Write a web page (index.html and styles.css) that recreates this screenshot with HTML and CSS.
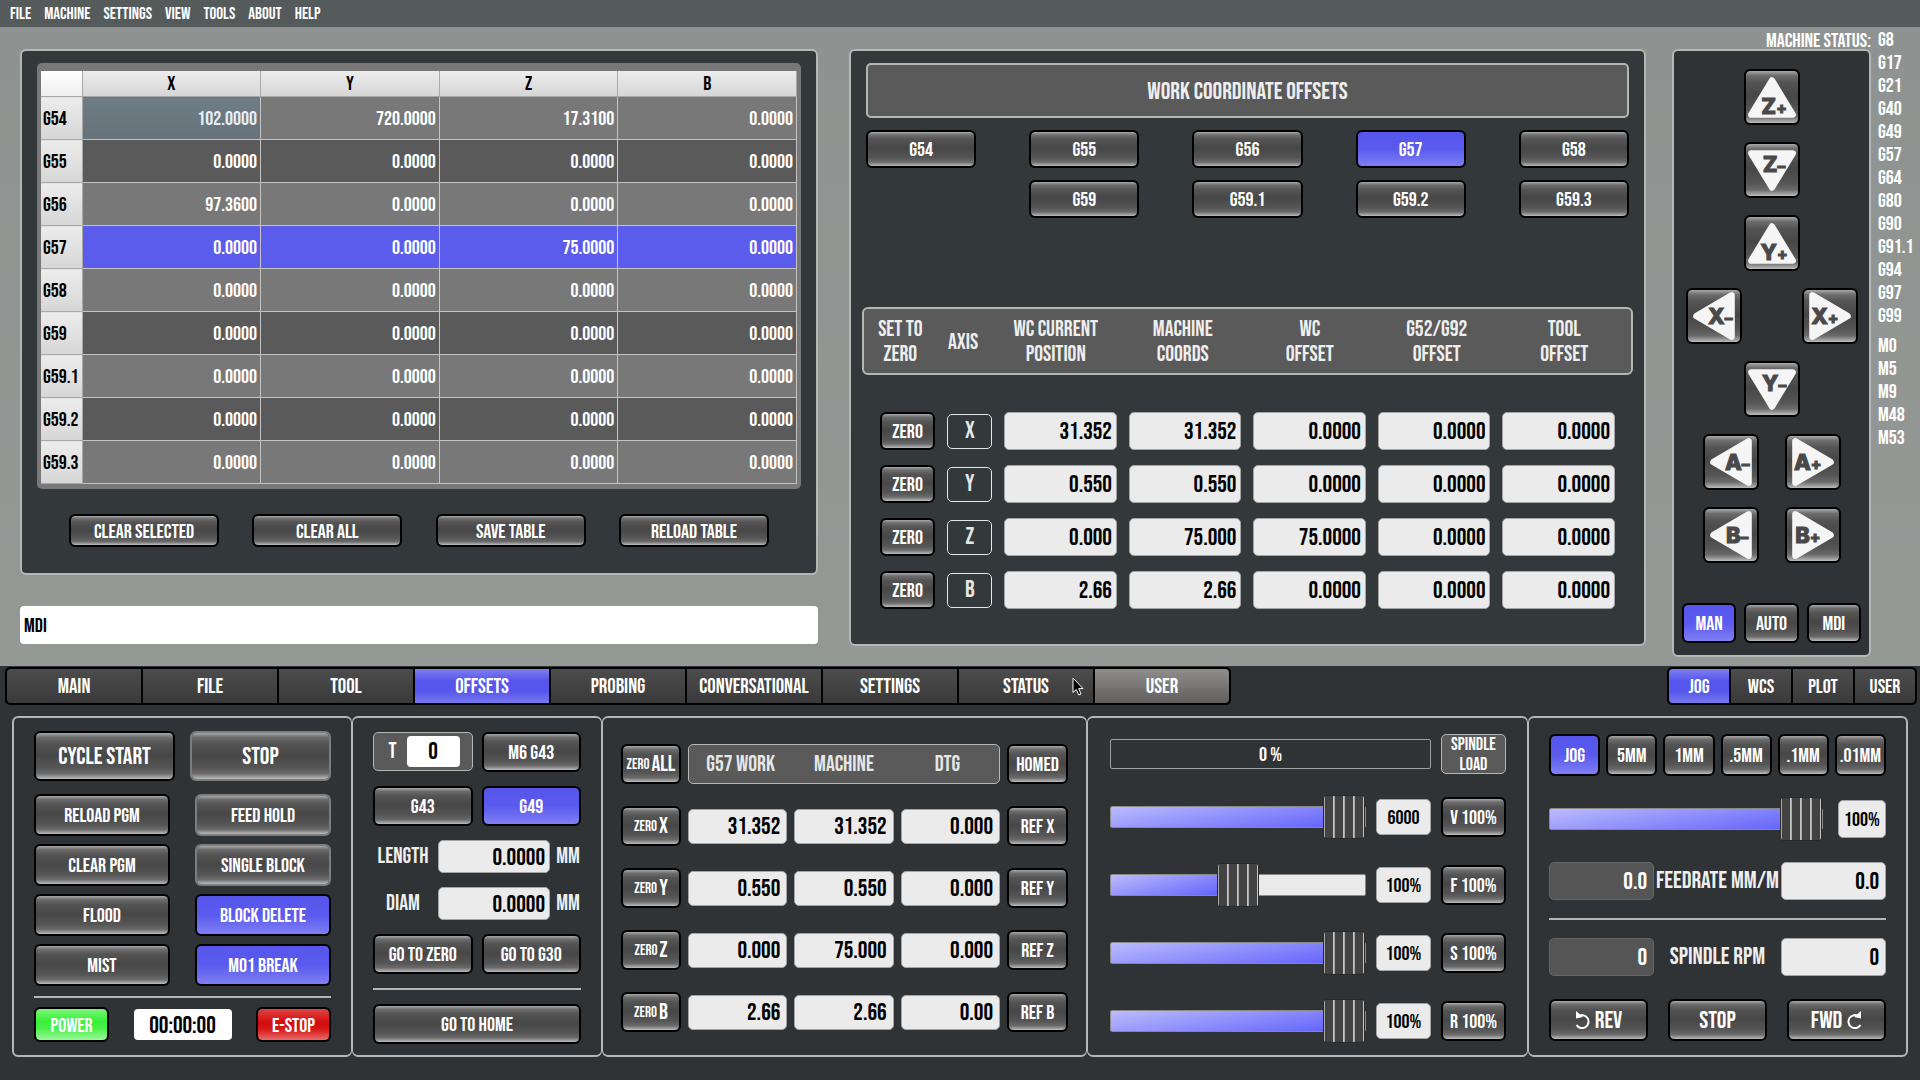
FILE: index.html
```
<!DOCTYPE html>
<html lang="en">
<head>
<meta charset="utf-8">
<title>Machine Control - Offsets</title>
<link rel="stylesheet" href="styles.css">
</head>
<body>
<svg width="0" height="0" class="defs" aria-hidden="true">
  <defs>
    <path id="tri-up" d="M25 9 L45 42 H5 Z"/>
    <path id="tri-down" d="M25 42 L45 9 H5 Z"/>
    <path id="tri-left" d="M8 25 L42 5 V45 Z"/>
    <path id="tri-right" d="M42 25 L8 5 V45 Z"/>
  </defs>
</svg>

<nav class="menubar">
  <a href="#">File</a><a href="#">Machine</a><a href="#">Settings</a><a href="#">View</a><a href="#">Tools</a><a href="#">About</a><a href="#">Help</a>
</nav>

<main class="upper">
  <div class="left">
    <section class="panel table-panel">
      <div class="table-frame">
        <table class="offsets">
          <thead><tr><th class="corner"></th><th>X</th><th>Y</th><th>Z</th><th>B</th></tr></thead>
          <tbody>
            <tr><th>G54</th><td class="current">102.0000</td><td>720.0000</td><td>17.3100</td><td>0.0000</td></tr>
            <tr><th>G55</th><td>0.0000</td><td>0.0000</td><td>0.0000</td><td>0.0000</td></tr>
            <tr><th>G56</th><td>97.3600</td><td>0.0000</td><td>0.0000</td><td>0.0000</td></tr>
            <tr class="active"><th>G57</th><td>0.0000</td><td>0.0000</td><td>75.0000</td><td>0.0000</td></tr>
            <tr><th>G58</th><td>0.0000</td><td>0.0000</td><td>0.0000</td><td>0.0000</td></tr>
            <tr><th>G59</th><td>0.0000</td><td>0.0000</td><td>0.0000</td><td>0.0000</td></tr>
            <tr><th>G59.1</th><td>0.0000</td><td>0.0000</td><td>0.0000</td><td>0.0000</td></tr>
            <tr><th>G59.2</th><td>0.0000</td><td>0.0000</td><td>0.0000</td><td>0.0000</td></tr>
            <tr><th>G59.3</th><td>0.0000</td><td>0.0000</td><td>0.0000</td><td>0.0000</td></tr>
          </tbody>
        </table>
      </div>
      <div class="table-actions">
        <button class="btn">Clear Selected</button>
        <button class="btn">Clear All</button>
        <button class="btn">Save Table</button>
        <button class="btn">Reload Table</button>
      </div>
    </section>
    <input class="mdi" type="text" placeholder="MDI" aria-label="MDI">
  </div>

  <section class="panel middle">
    <h1 class="title">Work Coordinate Offsets</h1>
    <div class="wcs-buttons">
      <button class="btn">G54</button>
      <button class="btn">G55</button>
      <button class="btn">G56</button>
      <button class="btn on">G57</button>
      <button class="btn">G58</button>
      <button class="btn second">G59</button>
      <button class="btn">G59.1</button>
      <button class="btn">G59.2</button>
      <button class="btn">G59.3</button>
    </div>
    <div class="axis-head">
      <span>Set to<br>Zero</span><span>Axis</span><span>WC Current<br>Position</span><span>Machine<br>Coords</span><span>WC<br>Offset</span><span>G52/G92<br>Offset</span><span>Tool<br>Offset</span>
    </div>
    <div class="axis-rows">
      <div class="axis-row">
        <button class="btn">Zero</button><span class="axis">X</span>
        <input class="field" aria-label="X position" value="31.352" readonly><input class="field" aria-label="X machine" value="31.352" readonly><input class="field" aria-label="X WC offset" value="0.0000" readonly><input class="field" aria-label="X G92 offset" value="0.0000" readonly><input class="field" aria-label="X tool offset" value="0.0000" readonly>
      </div>
      <div class="axis-row">
        <button class="btn">Zero</button><span class="axis">Y</span>
        <input class="field" aria-label="Y position" value="0.550" readonly><input class="field" aria-label="Y machine" value="0.550" readonly><input class="field" aria-label="Y WC offset" value="0.0000" readonly><input class="field" aria-label="Y G92 offset" value="0.0000" readonly><input class="field" aria-label="Y tool offset" value="0.0000" readonly>
      </div>
      <div class="axis-row">
        <button class="btn">Zero</button><span class="axis">Z</span>
        <input class="field" aria-label="Z position" value="0.000" readonly><input class="field" aria-label="Z machine" value="75.000" readonly><input class="field" aria-label="Z WC offset" value="75.0000" readonly><input class="field" aria-label="Z G92 offset" value="0.0000" readonly><input class="field" aria-label="Z tool offset" value="0.0000" readonly>
      </div>
      <div class="axis-row">
        <button class="btn">Zero</button><span class="axis">B</span>
        <input class="field" aria-label="B position" value="2.66" readonly><input class="field" aria-label="B machine" value="2.66" readonly><input class="field" aria-label="B WC offset" value="0.0000" readonly><input class="field" aria-label="B G92 offset" value="0.0000" readonly><input class="field" aria-label="B tool offset" value="0.0000" readonly>
      </div>
    </div>
  </section>

  <div class="jog-column">
    <p class="status-label">Machine Status:</p>
    <section class="panel jog-panel">
      <div class="jog-pad">
        <div><button class="btn jog"><svg viewBox="0 0 50 50"><use href="#tri-up"/><text x="27" y="41">Z<tspan>+</tspan></text></svg></button></div>
        <div><button class="btn jog"><svg viewBox="0 0 50 50"><use href="#tri-down"/><text x="27" y="27">Z<tspan>–</tspan></text></svg></button></div>
        <div><button class="btn jog"><svg viewBox="0 0 50 50"><use href="#tri-up"/><text x="27" y="41">Y<tspan>+</tspan></text></svg></button></div>
        <div class="wide"><button class="btn jog"><svg viewBox="0 0 50 50"><use href="#tri-left"/><text x="31" y="33">X<tspan>–</tspan></text></svg></button><button class="btn jog"><svg viewBox="0 0 50 50"><use href="#tri-right"/><text x="20" y="33">X<tspan>+</tspan></text></svg></button></div>
        <div><button class="btn jog"><svg viewBox="0 0 50 50"><use href="#tri-down"/><text x="27" y="27">Y<tspan>–</tspan></text></svg></button></div>
        <div class="pair"><button class="btn jog"><svg viewBox="0 0 50 50"><use href="#tri-left"/><text x="31" y="33">A<tspan>–</tspan></text></svg></button><button class="btn jog"><svg viewBox="0 0 50 50"><use href="#tri-right"/><text x="20" y="33">A<tspan>+</tspan></text></svg></button></div>
        <div class="pair"><button class="btn jog"><svg viewBox="0 0 50 50"><use href="#tri-left"/><text x="31" y="33">B<tspan>–</tspan></text></svg></button><button class="btn jog"><svg viewBox="0 0 50 50"><use href="#tri-right"/><text x="20" y="33">B<tspan>+</tspan></text></svg></button></div>
      </div>
      <div class="modes">
        <button class="btn on">Man</button><button class="btn">Auto</button><button class="btn">MDI</button>
      </div>
    </section>
  </div>

  <div class="codes">
    <ul><li>G8</li><li>G17</li><li>G21</li><li>G40</li><li>G49</li><li>G57</li><li>G64</li><li>G80</li><li>G90</li><li>G91.1</li><li>G94</li><li>G97</li><li>G99</li></ul>
    <ul><li>M0</li><li>M5</li><li>M9</li><li>M48</li><li>M53</li></ul>
  </div>
</main>

<footer class="lower">
  <div class="tab-row">
    <nav class="tabs main-tabs">
      <button>Main</button><button>File</button><button>Tool</button><button class="on">Offsets</button><button>Probing</button><button>Conversational</button><button>Settings</button><button class="with-pointer">Status<svg class="pointer" viewBox="0 0 12 19" aria-hidden="true"><path d="M1 1 V15.500 L4.300 12.500 L6.800 18 L9 17 L6.700 11.600 H11 Z"/></svg></button><button class="hover">User</button>
    </nav>
    <nav class="tabs side-tabs">
      <button class="on">Jog</button><button>WCS</button><button>Plot</button><button>User</button>
    </nav>
  </div>

  <div class="panels">
    <section class="box cycle">
      <div class="cycle-top"><button class="btn big">Cycle Start</button><button class="btn big dim">Stop</button></div>
      <div class="cycle-grid">
        <button class="btn">Reload PGM</button><button class="btn dim">Feed Hold</button>
        <button class="btn">Clear PGM</button><button class="btn dim">Single Block</button>
        <button class="btn">Flood</button><button class="btn on">Block Delete</button>
        <button class="btn">Mist</button><button class="btn on">M01 Break</button>
      </div>
      <hr>
      <div class="power-row"><button class="btn green">Power</button><input class="timer" aria-label="Run time" value="00:00:00" readonly><button class="btn red">E-Stop</button></div>
    </section>

    <section class="box tool">
      <div class="two">
        <label class="tool-no">T <input value="0"></label>
        <button class="btn">M6 G43</button>
        <button class="btn">G43</button>
        <button class="btn on">G49</button>
      </div>
      <div class="measure"><label for="len">Length</label><input id="len" class="field" value="0.0000" readonly><span>MM</span></div>
      <div class="measure"><label for="dia">Diam</label><input id="dia" class="field" value="0.0000" readonly><span>MM</span></div>
      <div class="two goto"><button class="btn">Go to Zero</button><button class="btn">Go to G30</button></div>
      <hr>
      <button class="btn home">Go to Home</button>
    </section>

    <section class="box dro">
      <div class="dro-row"><button class="btn"><small>Zero</small>All</button><div class="dro-head"><span>G57 Work</span><span>Machine</span><span>DTG</span></div><button class="btn">Homed</button></div>
      <div class="dro-row"><button class="btn"><small>Zero</small>X</button><input class="field" aria-label="X work" value="31.352" readonly><input class="field" aria-label="X machine position" value="31.352" readonly><input class="field" aria-label="X distance to go" value="0.000" readonly><button class="btn">Ref X</button></div>
      <div class="dro-row"><button class="btn"><small>Zero</small>Y</button><input class="field" aria-label="Y work" value="0.550" readonly><input class="field" aria-label="Y machine position" value="0.550" readonly><input class="field" aria-label="Y distance to go" value="0.000" readonly><button class="btn">Ref Y</button></div>
      <div class="dro-row"><button class="btn"><small>Zero</small>Z</button><input class="field" aria-label="Z work" value="0.000" readonly><input class="field" aria-label="Z machine position" value="75.000" readonly><input class="field" aria-label="Z distance to go" value="0.000" readonly><button class="btn">Ref Z</button></div>
      <div class="dro-row"><button class="btn"><small>Zero</small>B</button><input class="field" aria-label="B work" value="2.66" readonly><input class="field" aria-label="B machine position" value="2.66" readonly><input class="field" aria-label="B distance to go" value="0.00" readonly><button class="btn">Ref B</button></div>
    </section>

    <section class="box overrides">
      <div class="load-row"><div class="load-bar">0 %</div><div class="load-label">Spindle<br>Load</div></div>
      <div class="slide-row"><input type="range" class="slider" aria-label="Max velocity" value="100"><input class="value" aria-label="Velocity value" value="6000" readonly><button class="btn">V 100%</button></div>
      <div class="slide-row"><input type="range" class="slider half" aria-label="Feed override" value="50"><input class="value" aria-label="Feed value" value="100%" readonly><button class="btn">F 100%</button></div>
      <div class="slide-row"><input type="range" class="slider" aria-label="Spindle override" value="100"><input class="value" aria-label="Spindle value" value="100%" readonly><button class="btn">S 100%</button></div>
      <div class="slide-row"><input type="range" class="slider" aria-label="Rapid override" value="100"><input class="value" aria-label="Rapid value" value="100%" readonly><button class="btn">R 100%</button></div>
    </section>

    <section class="box jogging">
      <div class="steps"><button class="btn on">Jog</button><button class="btn">5MM</button><button class="btn">1MM</button><button class="btn">.5MM</button><button class="btn">.1MM</button><button class="btn">.01MM</button></div>
      <div class="jog-speed"><input type="range" class="slider" aria-label="Jog speed" value="100"><input class="value" aria-label="Jog speed value" value="100%" readonly></div>
      <div class="rate"><input class="field dark" aria-label="Feedrate actual" value="0.0" readonly><label for="feed">Feedrate MM/M</label><input id="feed" class="field" value="0.0" readonly></div>
      <hr>
      <div class="rate"><input class="field dark" aria-label="Spindle actual" value="0" readonly><label for="rpm">Spindle RPM</label><input id="rpm" class="field" value="0" readonly></div>
      <div class="spindle">
        <button class="btn big"><svg class="turn" viewBox="0 0 16 18"><path d="M3 5.500 A6.500 6.500 0 1 1 1.500 14"/><path class="tip" d="M1 0 L1 7.500 L8 6 Z"/></svg>Rev</button>
        <button class="btn big">Stop</button>
        <button class="btn big">Fwd<svg class="turn" viewBox="0 0 16 18"><path d="M13 5.500 A6.500 6.500 0 1 0 14.500 14"/><path class="tip" d="M15 0 L15 7.500 L8 6 Z"/></svg></button>
      </div>
    </section>
  </div>
</footer>
</body>
</html>
```
FILE: styles.css
```
* { box-sizing: border-box; }

:root {
  --blue: linear-gradient(#5656ec 0%, #5a5aee 50%, #7f7ff4 100%);
  --steel: linear-gradient(#a8a8a8 0%, #6e6d6e 9%, #555455 22%, #484748 48%, #555 75%, #6a6a6a 88%, #bcbcbc 100%);
  --line: #b4b7b4;
}

body {
  margin: 0;
  min-height: 100vh;
  display: flex;
  flex-direction: column;
  background: #2f3335;
  color: #fff;
  font: 20px/24px "Bebas Neue", "Roboto Condensed", sans-serif;
  text-transform: uppercase;
}

button, input { font: inherit; color: inherit; text-transform: inherit; min-width: 0; }
.defs { position: absolute; }
p, h1, ul { margin: 0; padding: 0; font-weight: normal; }

.menubar {
  display: flex;
  gap: 13px;
  height: 27px;
  padding: 2px 10px 0;
  background: #555a5b;
  font-size: 17px;
  line-height: 25px;
}
.menubar a { color: #fff; text-decoration: none; }

.upper {
  display: grid;
  grid-template-columns: minmax(0, 798fr) minmax(0, 854fr) minmax(0, 199fr) 43px;
  align-items: start;
  padding: 0 6px 9px 20px;
  background: linear-gradient(#8e9391, #949996);
}

.panel {
  border: 2px solid var(--line);
  border-radius: 6px;
  background: #33383a;
}

.btn {
  display: flex;
  align-items: center;
  justify-content: center;
  height: 40px;
  padding: 2px 0 0;
  border: 2px solid #000;
  border-radius: 6px;
  background: var(--steel) padding-box;
  white-space: nowrap;
}
.btn.on { background: var(--blue) padding-box; }
.btn.dim { border-color: #7c7e7e; }
.btn.big { font-size: 24px; }

.field {
  width: 100%;
  height: 38px;
  padding: 1px 6px 0;
  border: 1px solid #a5a5a5;
  border-radius: 5px;
  background: #ebebeb;
  color: #000;
  font-size: 24px;
  text-align: right;
}

hr { width: 100%; height: 2px; margin: 0; border: 0; background: var(--line); }

/* Offset table */
.left { padding-top: 22px; }
.table-panel { padding: 12px 15px 26px; }
.table-frame { padding: 8px 4px 5px; border-radius: 5px; background: #787878; }
.offsets { width: 100%; border-collapse: collapse; table-layout: fixed; }
.offsets th, .offsets td { height: 43px; padding: 1px 3px 0; border: 1px solid #c4c4c4; font-weight: normal; }
.offsets th { padding: 1px 2px 0; border-color: #a9a9a9; background: linear-gradient(#ececec, #d6d6d6); color: #000; text-align: left; }
.offsets thead th { height: 25px; border-top: 0; text-align: center; }
.offsets .corner { width: 41px; border: 0; background: linear-gradient(#fff, #eee); }
.offsets tbody th { border-left: 0; }
.offsets td { background: #787878; text-align: right; }
.offsets tr:nth-child(even) td { background: #5a5a5a; }
.offsets tr.active td { background: #5c5cec; }
.offsets tr td.current { background: linear-gradient(#6f7d86, #67727a); color: #e6eef6; }
.table-actions { display: flex; justify-content: space-between; padding: 25px 32px 0; }
.table-actions .btn { flex: 0 1 150px; height: 33px; }
.mdi { display: block; width: 100%; height: 38px; margin-top: 31px; padding: 1px 4px 0; border: 0; border-radius: 4px; background: #fff; color: #000; }
.mdi::placeholder { color: #000; opacity: 1; }

/* Work coordinate offsets */
.middle { margin: 22px 26px 0 31px; padding: 12px 11px 35px; }
.title { display: flex; align-items: center; justify-content: center; height: 55px; margin: 0 4px; padding-top: 2px; border: 2px solid var(--line); border-radius: 5px; background: #5a5a5a; font-size: 24px; color: #eee; }
.wcs-buttons { display: grid; grid-template-columns: repeat(5, 1fr); gap: 12px 53px; margin: 12px 4px 0; }
.wcs-buttons .btn { height: 38px; }
.wcs-buttons .second { grid-column: 2; }
.axis-head { display: grid; grid-template-columns: 73fr 53fr 133fr 122fr 133fr 122fr 134fr; align-items: center; height: 68px; margin-top: 89px; padding-top: 2px; border: 2px solid var(--line); border-radius: 6px; background: #5a5a5a; color: #eee; font-size: 22px; line-height: 25px; text-align: center; }
.axis-rows { display: flex; flex-direction: column; gap: 15px; margin: 37px 18px 0; }
.axis-row { display: grid; grid-template-columns: 55fr 45fr 112fr 112fr 112fr 112fr 112fr; gap: 12px; align-items: center; }
.axis-row .btn { height: 38px; }
.axis-row .field { padding: 1px 4px 0; }
.axis { display: flex; align-items: center; justify-content: center; height: 35px; border: 1px solid #e6e6e6; border-radius: 5px; font-size: 24px; color: #e6e6e6; }

/* Jog pad */
.status-label { height: 22px; line-height: 28px; text-align: right; white-space: nowrap; }
.jog-panel { padding: 18px 8px 12px; background: #2f3335; }
.jog-pad { display: flex; flex-direction: column; gap: 17px; margin-bottom: 40px; }
.jog-pad div { display: flex; justify-content: center; gap: 26px; }
.jog-pad .wide { gap: 60px; }
.jog { width: 56px; height: 56px; padding: 0; }
.jog svg { flex: none; width: 52px; height: 52px; }
.jog use { fill: #f5f5f5; stroke: #f5f5f5; stroke-width: 6px; stroke-linejoin: round; }
.jog text { fill: #4a494a; stroke: #4a494a; font: 800 21px Inter, sans-serif; text-anchor: middle; }
.jog tspan { font-size: 15px; }
.modes { display: grid; grid-template-columns: repeat(3, 1fr); gap: 8px; }
.codes { padding: 2px 0 0 7px; }
.codes ul { list-style: none; line-height: 23px; margin-bottom: 7px; }

/* Tab bars */
.tab-row { display: flex; justify-content: space-between; height: 50px; padding: 1px 3px 0 5px; }
.tabs { display: flex; gap: 2px; height: 38px; padding: 2px; border-radius: 5px; background: #000; }
.tabs button { position: relative; flex: 1 1 0; padding: 2px 0 0; border: 0; background: linear-gradient(#4c4c4c, #3a3a3a); }
.tabs button:first-child { border-radius: 4px 0 0 4px; }
.tabs button:last-child { border-radius: 0 4px 4px 0; }
.tabs .on { background: linear-gradient(#8080f0, #5656ec 35%, #5656ec 65%, #7878f0); }
.tabs .hover { background: linear-gradient(#8f8e8d, #605e5d); }
.main-tabs { flex: 0 1 1226px; font-size: 21px; }
.side-tabs { flex: 0 1 250px; }
.pointer { position: absolute; top: 8px; right: 9px; width: 12px; height: 19px; fill: #000; stroke: #fff; }

/* Lower panels */
.panels { display: grid; grid-template-columns: 340fr 250fr 485fr 441fr 380fr; padding: 0 12px 24px; }
.box { display: flex; flex-direction: column; padding-bottom: 11px; border: 2px solid var(--line); border-radius: 6px; }
.box + .box { border-left-width: 1px; }
.box:not(:last-child) { border-right-width: 1px; }

.cycle { padding: 13px 20px 12px; }
.cycle-top { display: grid; grid-template-columns: 1fr 1fr; gap: 15px; }
.cycle-top .btn { height: 50px; }
.cycle-grid { display: grid; grid-template-columns: 1fr 1fr; gap: 8px 25px; margin: 13px 0 10px; }
.cycle-grid .btn { height: 42px; }
.power-row { display: flex; align-items: center; justify-content: space-between; margin-top: 9px; }
.power-row .btn { width: 75px; height: 35px; }
.btn.green { background: linear-gradient(#7cf57c, #35f035 40%, #4ff04f 65%, #9bf79b) padding-box; }
.btn.red { background: linear-gradient(#e04444, #d20a0a 45%, #d81818 65%, #ea6c6c) padding-box; }
.timer { width: 98px; height: 31px; padding: 1px 0 0; border: 0; border-radius: 4px; background: #fff; color: #000; font-size: 24px; text-align: center; }

.tool { padding: 14px 20px 11px; }
.two { display: grid; grid-template-columns: 1fr 1fr; gap: 14px 9px; }
.tool-no { display: flex; align-items: center; justify-content: flex-end; gap: 10px; height: 39px; padding-right: 12px; border: 1px solid var(--line); border-radius: 5px; background: #5a5a5a; font-size: 22px; }
.tool-no input { width: 53px; height: 31px; padding: 0; border: 0; border-radius: 4px; background: #fff; color: #000; font-size: 24px; text-align: center; }
.measure { display: grid; grid-template-columns: 60px 1fr 26px; gap: 5px; align-items: center; height: 33px; margin-top: 14px; font-size: 22px; text-align: center; color: #eee; }
.measure .field { height: 33px; padding: 1px 4px 0; }
.goto { margin: 14px 0; }
.home { margin-top: 14px; }

.dro { padding: 26px 18px 11px; gap: 22px; }
.dro-row { display: grid; grid-template-columns: 60px 1fr 1fr 1fr 61px; gap: 7px; align-items: center; }
.dro-row .field { height: 35px; }
.dro-row small { padding: 0 2px 0 0; font-size: 15px; }
.dro-row .btn:first-child { font-size: 22px; }
.dro-head { grid-column: 2 / 5; display: grid; grid-template-columns: 1fr 1fr 1fr; align-items: center; height: 40px; padding-top: 2px; border: 1px solid var(--line); border-radius: 5px; background: #5a5a5a; color: #e6e6e6; font-size: 22px; text-align: center; }

.overrides { padding: 16px 21px 11px 22px; gap: 24px; }
.load-row { display: grid; grid-template-columns: 1fr 65px; gap: 10px; align-items: center; height: 37px; }
.load-bar { height: 30px; border: 1px solid #9fa2a2; border-radius: 2px; line-height: 30px; text-align: center; }
.load-label { height: 40px; border: 1px solid var(--line); border-radius: 5px; background: #5a5a5a; font-size: 18px; line-height: 20px; text-align: center; }
.slide-row { display: grid; grid-template-columns: 1fr 55px 65px; gap: 10px; align-items: center; height: 44px; }
.value { width: 100%; height: 36px; padding: 1px 0 0; border: 1px solid #a5a5a5; border-radius: 5px; background: #ebebeb; color: #000; text-align: center; }

.slider { display: block; width: 100%; height: 44px; margin: 0; appearance: none; background: none; }
.slider::-webkit-slider-runnable-track { height: 22px; border: 1px solid #8a8a8a; border-radius: 2px; background: linear-gradient(170deg, #bcbcfd, #5f5ffb 95%); }
.slider.half::-webkit-slider-runnable-track { background: linear-gradient(165deg, #bcbcfd, #5f5ffb 95%) left / 50% 100% no-repeat #ebebeb; }
.slider::-webkit-slider-thumb {
  appearance: none;
  width: 42px;
  height: 44px;
  margin-top: -12px;
  border: 1px solid #2a2a2a;
  border-radius: 3px;
  background: repeating-linear-gradient(90deg, #a8a8a8 0 1px, #424242 1px 9px, #c4c4c4 9px 10px) #424242;
}

.jogging { padding: 16px 20px 11px; }
.steps { display: grid; grid-template-columns: repeat(6, 1fr); gap: 6px; }
.steps .btn { height: 42px; }
.jog-speed { display: grid; grid-template-columns: 1fr 48px; gap: 15px; align-items: center; margin-top: 21px; }
.jog-speed .value { height: 38px; }
.rate { display: grid; grid-template-columns: 105px 1fr 105px; align-items: center; margin: 21px 0 18px; font-size: 24px; text-align: center; white-space: nowrap; color: #eee; }
hr + .rate { margin: 18px 0 23px; }
.field.dark { border-color: #666; background: #555; color: #fff; }
.spindle { display: grid; grid-template-columns: repeat(3, 1fr); gap: 20px; }
.spindle .btn { height: 42px; gap: 4px; }
.turn { flex: none; width: 16px; height: 18px; margin-bottom: 2px; fill: none; stroke: #fff; stroke-width: 2px; }
.turn .tip { fill: #fff; stroke: none; }
```
